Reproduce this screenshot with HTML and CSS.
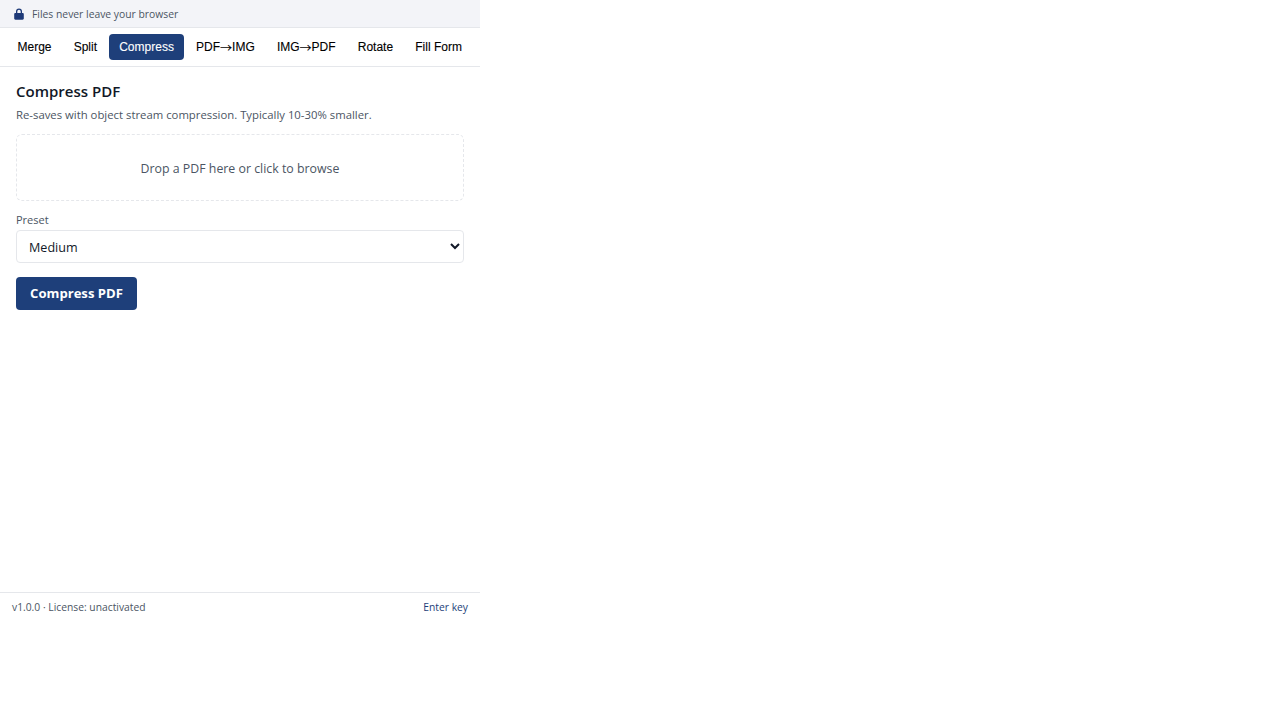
FILE: index.html
```html
<!DOCTYPE html>
<html lang="en">
<head>
<meta charset="utf-8">
<title>Compress PDF</title>
<link rel="stylesheet" href="styles.css">
</head>
<body>
<div class="app">
  <div class="privacy">
    <svg class="lock" width="10" height="12" viewBox="0 0 10 12"><path d="M2 5V3.400a3 3 0 0 1 6 0V5h.6c.7 0 1.200.5 1.200 1.200v4.400c0 .7-.5 1.200-1.200 1.200H1.400c-.7 0-1.200-.5-1.200-1.200V6.200C.2 5.500.7 5 1.400 5zm1.300 0h3.400V3.400a1.700 1.700 0 0 0-3.400 0z" fill="#1e3a78"/></svg>
    <span>Files never leave your browser</span>
  </div>
  <nav class="tabs">
    <button class="tab">Merge</button>
    <button class="tab">Split</button>
    <button class="tab active">Compress</button>
    <button class="tab">PDF<span class="arrow">→</span>IMG</button>
    <button class="tab">IMG<span class="arrow">→</span>PDF</button>
    <button class="tab">Rotate</button>
    <button class="tab">Fill Form</button>
  </nav>
  <main class="panel">
    <h1 class="title">Compress PDF</h1>
    <p class="desc">Re-saves with object stream compression. Typically 10-30% smaller.</p>
    <div class="drop"><span class="drop-text">Drop a PDF here or click to browse</span></div>
    <label class="label" for="preset">Preset</label>
    <select class="select" id="preset">
      <option>Medium</option>
    </select>
    <button class="primary">Compress PDF</button>
  </main>
  <footer class="foot">
    <span>v1.0.0 · License: unactivated</span>
    <a class="key" href="#">Enter key</a>
  </footer>
</div>
</body>
</html>
```
FILE: styles.css
```css
* { box-sizing: border-box; }
html, body { margin: 0; padding: 0; background: #fff; }
body { font-family: "Open Sans", "Noto Sans", sans-serif; color: #111827; }
.app { width: 480px; height: 620px; display: flex; flex-direction: column; }
.privacy {
  height: 28px; display: flex; align-items: center; gap: 8px; padding: 0 14px;
  background: #f3f4f8; border-bottom: 1px solid #e5e7eb; font-size: 10.35px; color: #4b5563;
}
.lock { flex: none; }
.tabs {
  height: 39px; display: flex; align-items: flex-start; padding: 6px 8px 0 7.5px;
  border-bottom: 1px solid #e5e7eb; justify-content: space-between;
}
.tab {
  font-family: "Liberation Sans", Arial, sans-serif; font-size: 12px; color: #000;
  background: transparent; border: 0; border-radius: 4px; height: 26px; padding: 0 10px;
  -webkit-text-stroke: 0.1px currentColor;
}
.tab.active { background: #1e3f7a; color: #fff; }
.arrow {
  display: inline-block; width: 12px; line-height: 1; text-align: center; vertical-align: -2px;
  font-family: "Noto Sans CJK SC", sans-serif; font-size: 12px;
}
.panel { flex: 1; padding: 14px 16px 0; display: flex; flex-direction: column; align-items: stretch; }
.title { margin: 0; font-size: 15px; line-height: 21px; font-weight: 600; color: #111827; }
.desc { margin: 5px 0 0; font-size: 11.34px; line-height: 16px; color: #4b5563; }
.drop {
  margin-top: 11px; height: 67px; display: flex; align-items: center; justify-content: center;
  border: 1px dashed #e5e7eb; border-radius: 6px; font-size: 12.35px; color: #4b5563;
}
.drop-text { padding-top: 2px; }
.label { margin-top: 11px; font-size: 11px; line-height: 16px; color: #4b5563; }
.select {
  margin-top: 2px; height: 33px; width: 100%; padding: 2px 8px 0; background: #fff;
  border: 1px solid #e5e7eb; border-radius: 4px; font-family: inherit; font-size: 12.6px; color: #111827;
}
.primary {
  margin-top: 14px; align-self: flex-start; height: 33px; width: 121px; padding: 0 0 2px;
  background: #1e3f7a; color: #fff; border: 0; border-radius: 4px;
  font-family: inherit; font-size: 13.1px; font-weight: 700;
}
.foot {
  height: 28px; display: flex; align-items: center; justify-content: space-between; padding: 0 12px;
  border-top: 1px solid #e5e7eb; font-size: 10.3px; color: #4b5563;
}
.key { color: #1e3f7a; text-decoration: none; }
```
